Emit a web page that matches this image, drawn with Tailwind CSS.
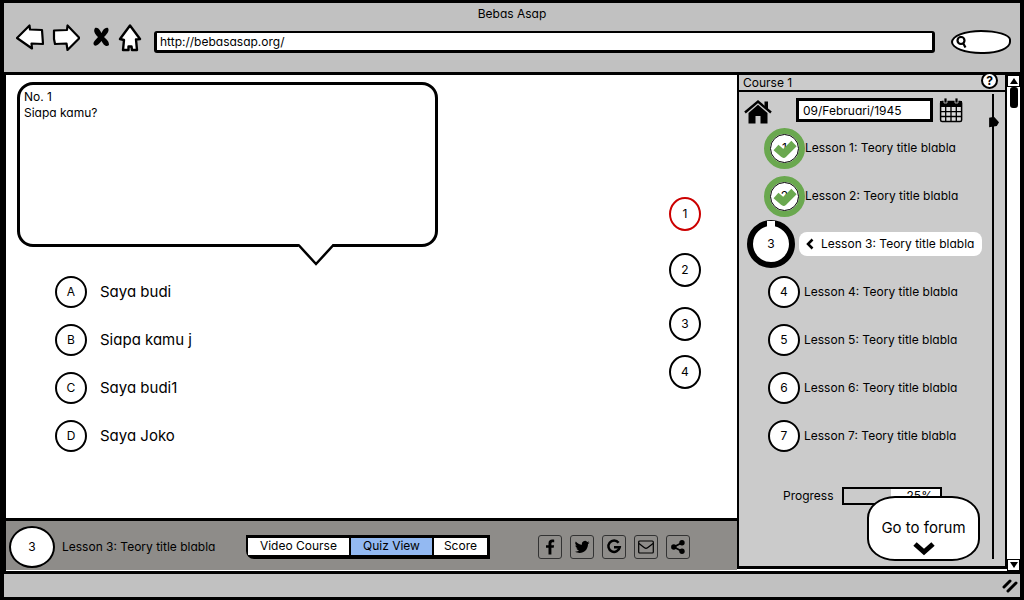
<!DOCTYPE html>
<html lang="id">
<head>
<meta charset="utf-8">
<meta name="viewport" content="width=device-width, initial-scale=1">
<title>Bebas Asap</title>
<script src="https://cdn.jsdelivr.net/npm/@tailwindcss/browser@4"></script>
</head>
<body class="bg-white font-['Inter','Liberation_Sans',sans-serif] text-[12px] leading-4 text-black [font-feature-settings:'cv11']">
<div class="flex min-h-screen flex-col border-t-[3px] border-r-4 border-b-[3px] border-l-4 border-black bg-[#c1c1c1]">

  <!-- Browser header -->
  <header class="flex flex-col px-3 pt-[3px] pb-[18px]">
    <h1 class="text-center">Bebas Asap</h1>
    <div class="flex items-center">
      <button aria-label="Back" class="h-7 w-7"><svg class="h-7 w-7" viewBox="0 0 28 28" fill="#fff" stroke="#000" stroke-width="2.2" stroke-linejoin="round"><path d="M1 14 13.500 1.500 14 5.500 26 6 27 20 15.500 19.500 16 24.500Z"/></svg></button>
      <button aria-label="Forward" class="ml-2 h-7 w-7"><svg class="h-7 w-7" viewBox="0 0 28 28" fill="#fff" stroke="#000" stroke-width="2.2" stroke-linejoin="round"><path d="M27.500 14 15.500 1.500 15 6 2 6.500 2 15 3 20 14.500 19.500 15.500 26Z"/></svg></button>
      <button aria-label="Stop" class="ml-3 h-7 w-5"><svg class="h-7 w-5" viewBox="0 0 20 28" fill="#000"><path d="M3 4C7 3 8 7 9.500 9 11 6 13 3 16 4 18 7 14 11 12 13 15 16 17 17 17 21 14 24 11 20 9.500 17 7 20 4 23 2 21 0 18 4 16 6 13 3 10 1 7 3 4Z"/></svg></button>
      <button aria-label="Home page" class="ml-[6px] h-7 w-6"><svg class="h-7 w-6" viewBox="0 0 24 28" fill="#fff" stroke="#000" stroke-width="2.4" stroke-linejoin="round"><path d="M12 1.500 22 15 18 15.500 19 26 14 26 13.500 22.500 10.500 22.500 10.500 26 5 26 6 16 2 15Z"/></svg></button>
      <input aria-label="Address" type="text" value="http://bebasasap.org/" class="mt-2 ml-3 h-[22px] min-w-0 flex-1 rounded-[3px] border-t-2 border-r-[3px] border-b-[3px] border-l-[3px] border-black bg-white px-[3px]">
      <div class="relative mt-2 mr-[-3px] ml-4 flex h-6 w-[60px] items-center rounded-[50%_50%_45%_50%/50%_40%_50%_50%] border-2 border-black bg-white">
        <svg class="ml-[3px] h-3 w-3 shrink-0" viewBox="0 0 12 12" fill="none" stroke="#000" stroke-width="2.200"><circle cx="5" cy="4.500" r="3.500"/><path d="m7 7 2.500 4.500"/></svg>
        <input aria-label="Search" type="search" class="min-w-0 flex-1 appearance-none bg-transparent outline-none">
      </div>
    </div>
  </header>

  <div class="flex flex-1 border-y-[3px] border-black bg-white">
    <div class="flex min-w-0 flex-1 flex-col border-l-2 border-black">
      <!-- Quiz -->
      <main class="flex flex-1 justify-between">
        <section class="w-[432px] shrink pt-[7px] pl-[11px]">
          <div class="relative h-[165px] rounded-2xl border-[3px] border-black bg-white px-1 pt-1">
            <p>No. 1</p>
            <h2>Siapa kamu?</h2>
            <svg class="absolute top-[158px] left-[276px] h-6 w-[40px]" viewBox="0 0 40 24" fill="#fff"><path d="M3.500 0h33v3.800L20 22 2 3.800z"/><path d="M1 2.500 3 2.500 20 21 37 2.500 39 2.500" fill="none" stroke="#000" stroke-width="2.500"/></svg>
          </div>
          <ul class="mt-[29px] ml-[38px] flex flex-col gap-4 text-[15px]">
            <li><button class="flex items-center gap-[13px]"><span class="flex h-8 w-8 items-center justify-center rounded-full border-2 border-black text-[12px]">A</span>Saya budi</button></li>
            <li><button class="flex items-center gap-[13px]"><span class="flex h-8 w-8 items-center justify-center rounded-full border-2 border-black text-[12px]">B</span>Siapa kamu j</button></li>
            <li><button class="flex items-center gap-[13px]"><span class="flex h-8 w-8 items-center justify-center rounded-full border-2 border-black text-[12px]">C</span>Saya budi1</button></li>
            <li><button class="flex items-center gap-[13px]"><span class="flex h-8 w-8 items-center justify-center rounded-full border-2 border-black text-[12px]">D</span>Saya Joko</button></li>
          </ul>
        </section>
        <nav aria-label="Questions" class="mr-9 flex flex-col pt-[122px]">
          <a href="#q1" class="flex h-[34px] w-8 items-center justify-center rounded-[50%] border-2 border-[#cc0000]">1</a>
          <a href="#q2" class="mt-[22px] flex h-[34px] w-8 items-center justify-center rounded-[50%] border-2 border-black">2</a>
          <a href="#q3" class="mt-5 flex h-[34px] w-8 items-center justify-center rounded-[50%] border-2 border-black">3</a>
          <a href="#q4" class="mt-[14px] flex h-[34px] w-8 items-center justify-center rounded-[50%] border-2 border-black">4</a>
        </nav>
      </main>

      <!-- Lesson bar -->
      <footer class="flex h-[53px] items-center border-t-[3px] border-b border-t-black border-b-white bg-[#8e8c89] pt-[2px] pl-[3px]">
        <span class="flex h-[42px] w-[46px] items-center justify-center rounded-[50%] border-2 border-black bg-white">3</span>
        <span class="ml-[7px]">Lesson 3: Teory title blabla</span>
        <div class="ml-auto flex h-6 rounded-bl-lg border-t-[3px] border-r-[3px] border-b-4 border-l-2 border-black">
          <button class="bg-white px-3 whitespace-nowrap">Video Course</button>
          <button aria-pressed="true" class="border-x-2 border-black bg-[#93b9f2] px-3 whitespace-nowrap">Quiz View</button>
          <button class="bg-white px-[10px]">Score</button>
        </div>
        <div class="mr-[47px] ml-12 flex gap-2">
          <a href="#facebook" aria-label="Facebook" class="flex h-6 w-6 items-center justify-center rounded-[3px] border border-[#333]"><svg class="h-4 w-4" viewBox="0 0 16 16"><path d="M6.500 15.500V8.800H4V6.200h2.500V4.300C6.500 1.900 8 .6 10.200.6c1 0 1.600.1 2 .2v2.500h-1.400c-1.100 0-1.400.6-1.400 1.300v1.600h2.700l-.4 2.600H9.400v6.700z"/></svg></a>
          <a href="#twitter" aria-label="Twitter" class="flex h-6 w-6 items-center justify-center rounded-[3px] border border-[#333]"><svg class="h-4 w-4" viewBox="0 0 16 16"><path d="M15.500 3.400c-.5.300-1.100.4-1.700.5.600-.4 1.100-1 1.300-1.700-.6.400-1.200.6-1.900.8a3 3 0 0 0-5.200 2.700C5.500 5.600 3.300 4.400 1.800 2.500a3 3 0 0 0 .9 4.100c-.5 0-.9-.1-1.300-.4 0 1.500 1 2.700 2.400 3-.4.100-.9.100-1.300 0 .4 1.300 1.500 2.100 2.800 2.100A6 6 0 0 1 .8 12.600C7.200 16.400 14 12 14 5c.600-.4 1.100-1 1.500-1.600z"/></svg></a>
          <a href="#google" aria-label="Google" class="flex h-6 w-6 items-center justify-center rounded-[3px] border border-[#333]"><svg class="h-4 w-4" viewBox="0 0 16 16" fill="none" stroke="#000" stroke-width="2.500"><path d="M12.600 3.700A5.700 5.700 0 1 0 13.700 8.200H8"/></svg></a>
          <a href="#mail" aria-label="Email" class="flex h-6 w-6 items-center justify-center rounded-[3px] border border-[#333]"><svg class="h-4 w-4" viewBox="0 0 16 16" fill="none" stroke="#000" stroke-width="1.200"><rect x=".7" y="2" width="14.600" height="12" rx="1"/><path d="M1 4.500c2.500 2 4 3.200 5.500 4.300 1.200.9 1.800.9 3 0C11 7.700 12.500 6.500 15 4.500"/></svg></a>
          <a href="#share" aria-label="Share" class="flex h-6 w-6 items-center justify-center rounded-[3px] border border-[#333]"><svg class="h-4 w-4" viewBox="0 0 16 16"><circle cx="3.800" cy="8" r="2.700"/><circle cx="12" cy="3.800" r="2.700"/><circle cx="12" cy="12.200" r="2.700"/><path d="M12 3.800 3.800 8l8.200 4.200" fill="none" stroke="#000" stroke-width="1.800"/></svg></a>
        </div>
      </footer>
    </div>

    <!-- Course panel -->
    <aside class="relative mb-[2px] flex w-[270px] shrink-0 flex-col border-x-2 border-b-[3px] border-black bg-[#cbcbcb]">
      <div class="flex h-[17px] items-center justify-between border-b-2 border-black pl-1">
        <h2>Course 1</h2>
        <button aria-label="Help" class="mt-[-4px] mr-[7px] flex h-[17px] w-[17px] items-center justify-center rounded-full border-2 border-black bg-white font-bold">?</button>
      </div>
      <div class="flex flex-1">
        <div class="flex min-w-0 flex-1 flex-col pl-[5px]">
          <div class="flex items-center pt-1">
            <a href="#home" aria-label="Home" class="mt-1"><svg class="h-6 w-7" viewBox="0 0 28 24"><path d="M14 4.800 4.500 13v10.500h7v-7.500h5v7.500h7V13z"/><path d="M1 12.500 14 1.600 27 12.500" fill="none" stroke="#000" stroke-width="2.400"/><path d="M20.500 1.500h3.500v8l-3.500-3z"/></svg></a>
            <input aria-label="Date" type="text" value="09/Februari/1945" class="ml-6 h-6 w-[137px] border-[3px] border-black bg-white px-1">
            <button aria-label="Pick a date" class="ml-[6px]"><svg class="h-[26px] w-6" viewBox="0 0 24 26"><rect x="1.600" y="4.500" width="21" height="20" rx="1.500" fill="#ddd" stroke="#000" stroke-width="1.500"/><path d="M1 4h22v6H1z"/><path d="M6.700 10v14M12 10v14M17.300 10v14M2 14.700h20M2 19.500h20" stroke="#000" stroke-width="1.300"/><path d="M5 1h3v5H5zM16 1h3v5h-3z" stroke="#cbcbcb" stroke-width=".8"/></svg></button>
          </div>
          <ol class="flex flex-col">
            <li class="flex h-12 items-center pl-5"><span class="relative flex h-[41px] w-[41px] items-center justify-center rounded-full border-[6px] border-[#6aa84f] bg-white"><span class="flex h-[29px] w-[29px] items-center justify-center rounded-full border border-black">1</span><svg class="absolute top-[5px] left-[3px] h-5 w-[24px]" viewBox="0 0 24 20" fill="none" stroke="#6aa84f" stroke-width="7.500" stroke-linejoin="round"><path d="m3 8.500 7.500 6.500L21 4.500"/></svg></span><a href="#lesson1" class="whitespace-nowrap">Lesson 1: Teory title blabla</a></li>
            <li class="flex h-12 items-center pl-5"><span class="relative flex h-[41px] w-[41px] items-center justify-center rounded-full border-[6px] border-[#6aa84f] bg-white"><span class="flex h-[29px] w-[29px] items-center justify-center rounded-full border border-black">2</span><svg class="absolute top-[5px] left-[3px] h-5 w-[24px]" viewBox="0 0 24 20" fill="none" stroke="#6aa84f" stroke-width="7.500" stroke-linejoin="round"><path d="m3 8.500 7.500 6.500L21 4.500"/></svg></span><a href="#lesson2" class="whitespace-nowrap">Lesson 2: Teory title blabla</a></li>
            <li class="flex h-12 items-center pl-[3px]"><span class="relative flex h-12 w-12 items-center justify-center rounded-full border-[6px] border-black bg-white">3<i class="absolute -top-[5px] left-[14px] h-2 w-2 bg-white"></i></span><a href="#lesson3" aria-current="true" class="ml-1 flex h-6 items-center gap-[7px] rounded-lg bg-white pr-2 pl-[6px] whitespace-nowrap"><svg class="h-3 w-[9px]" viewBox="0 0 9 12" fill="none" stroke="#000" stroke-width="2.500"><path d="M7.500 1.500 3 6l4.500 4.500"/></svg>Lesson 3: Teory title blabla</a></li>
            <li class="flex h-12 items-center gap-1 pl-6"><span class="flex h-8 w-8 items-center justify-center rounded-full border-2 border-black bg-white">4</span><a href="#lesson4" class="whitespace-nowrap">Lesson 4: Teory title blabla</a></li>
            <li class="flex h-12 items-center gap-1 pl-6"><span class="flex h-8 w-8 items-center justify-center rounded-full border-2 border-black bg-white">5</span><a href="#lesson5" class="whitespace-nowrap">Lesson 5: Teory title blabla</a></li>
            <li class="flex h-12 items-center gap-1 pl-6"><span class="flex h-8 w-8 items-center justify-center rounded-full border-2 border-black bg-white">6</span><a href="#lesson6" class="whitespace-nowrap">Lesson 6: Teory title blabla</a></li>
            <li class="flex h-12 items-center gap-1 pl-6"><span class="flex h-8 w-8 items-center justify-center rounded-full border-2 border-black bg-white">7</span><a href="#lesson7" class="whitespace-nowrap">Lesson 7: Teory title blabla</a></li>
          </ol>
          <div class="mt-[27px] flex items-center gap-2 pl-[39px]">
            <span id="progress-label">Progress</span>
            <div role="progressbar" aria-labelledby="progress-label" aria-valuenow="25" class="flex h-[18px] w-[100px] items-center border-2 border-black">
              <span class="w-[47px]"></span><span class="flex-1 bg-white pl-4 leading-[14px]">25%</span>
            </div>
          </div>
        </div>
        <input aria-label="List position" type="range" min="0" max="100" value="5" class="mt-[2px] mr-[6px] mb-[7px] w-[11px] appearance-none bg-[linear-gradient(90deg,transparent_4px,#000_4px,#000_6px,transparent_6px)] [writing-mode:vertical-lr] [&::-webkit-slider-thumb]:h-[11px] [&::-webkit-slider-thumb]:w-[11px] [&::-webkit-slider-thumb]:appearance-none [&::-webkit-slider-thumb]:bg-black [&::-webkit-slider-thumb]:[clip-path:polygon(10%_10%,55%_0,100%_50%,80%_85%,10%_95%)]">
      </div>
      <button class="absolute right-[25px] bottom-[5px] flex h-[65px] w-[113px] flex-col items-center rounded-[28px/22px] border-2 border-black bg-white pt-[22px] text-[15px]">Go to forum<svg class="mt-[6px] h-[14px] w-[22px] shrink-0" viewBox="0 0 22 14" fill="none" stroke="#000" stroke-width="5"><path d="m2 2 9 8L20 2"/></svg></button>
    </aside>

    <!-- Page scroll bar -->
    <div class="flex w-[13px] shrink-0 flex-col items-center justify-between bg-white">
      <div class="flex w-full flex-col items-center">
        <button aria-label="Scroll up" class="flex h-3 w-full items-center justify-center border border-black"><svg class="h-2 w-2" viewBox="0 0 8 8"><path d="M4 1 8 7H0z"/></svg></button>
        <div class="h-[21px] w-2 rounded-[3px] bg-black"></div>
      </div>
      <button aria-label="Scroll down" class="flex h-3 w-full items-center justify-center border border-black"><svg class="h-2 w-2" viewBox="0 0 8 8"><path d="M4 7 8 1H0z"/></svg></button>
    </div>
  </div>

  <!-- Status bar -->
  <div class="flex h-[23px] items-center justify-end pr-[2px]">
    <svg class="h-4 w-4" viewBox="0 0 16 16" stroke="#000" stroke-width="3" stroke-linecap="round"><path d="M2 9 8 3M6 13 14 5"/></svg>
  </div>
</div>
</body>
</html>
